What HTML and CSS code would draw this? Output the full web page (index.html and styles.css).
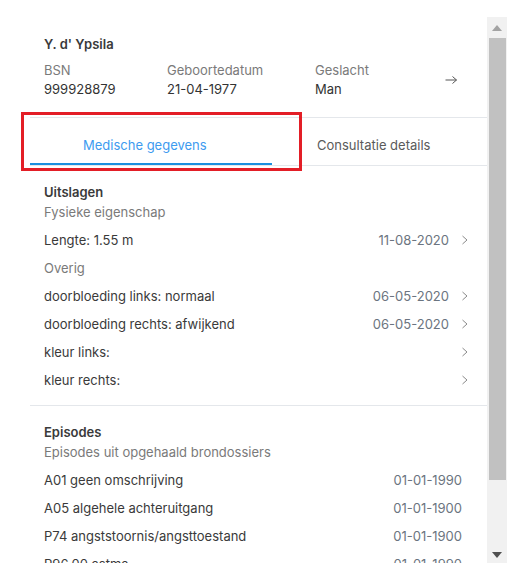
FILE: index.html
```html
<!DOCTYPE html>
<html lang="nl">
<head>
    <meta charset="utf-8">
    <title>Patiënt</title>
    <link rel="stylesheet" href="styles.css">
</head>
<body>
<div class="page">
    <div class="panel">
        <div class="panel-body">
            <div class="patient">
                <div class="patient-name">Y. d' Ypsila</div>
                <div class="patient-info">
                    <div>
                        <div class="label">BSN</div>
                        <div class="value">999928879</div>
                    </div>
                    <div>
                        <div class="label">Geboortedatum</div>
                        <div class="value">21-04-1977</div>
                    </div>
                    <div>
                        <div class="label">Geslacht</div>
                        <div class="value">Man</div>
                    </div>
                    <svg class="arrow" width="16" height="16" viewBox="0 0 16 16">
                        <path d="M2.5 8H13.5M9.5 4.5L13.5 8L9.5 11.5" fill="none" stroke="#555" stroke-width="1"/>
                    </svg>
                </div>
            </div>

            <div class="tabs">
                <div class="tab tab-first active">Medische gegevens</div>
                <div class="tab tab-second">Consultatie details</div>
            </div>

            <div class="section">
                <div class="section-title">Uitslagen</div>
                <div class="section-sub">Fysieke eigenschap</div>
                <div class="list">
                    <div class="row">
                        <span>Lengte: 1.55 m</span>
                        <span class="date">11-08-2020</span>
                        <svg class="chevron" width="16" height="16" viewBox="0 0 16 16"><path d="M5.5 4L10 8L5.5 12" fill="none" stroke="#8a8a8a" stroke-width="1"/></svg>
                    </div>
                    <div class="row group">Overig</div>
                    <div class="row">
                        <span>doorbloeding links: normaal</span>
                        <span class="date">06-05-2020</span>
                        <svg class="chevron" width="16" height="16" viewBox="0 0 16 16"><path d="M5.5 4L10 8L5.5 12" fill="none" stroke="#8a8a8a" stroke-width="1"/></svg>
                    </div>
                    <div class="row">
                        <span>doorbloeding rechts: afwijkend</span>
                        <span class="date">06-05-2020</span>
                        <svg class="chevron" width="16" height="16" viewBox="0 0 16 16"><path d="M5.5 4L10 8L5.5 12" fill="none" stroke="#8a8a8a" stroke-width="1"/></svg>
                    </div>
                    <div class="row">
                        <span>kleur links:</span>
                        <span class="date"></span>
                        <svg class="chevron" width="16" height="16" viewBox="0 0 16 16"><path d="M5.5 4L10 8L5.5 12" fill="none" stroke="#8a8a8a" stroke-width="1"/></svg>
                    </div>
                    <div class="row">
                        <span>kleur rechts:</span>
                        <span class="date"></span>
                        <svg class="chevron" width="16" height="16" viewBox="0 0 16 16"><path d="M5.5 4L10 8L5.5 12" fill="none" stroke="#8a8a8a" stroke-width="1"/></svg>
                    </div>
                </div>
            </div>

            <div class="section section-last">
                <div class="section-title">Episodes</div>
                <div class="section-sub">Episodes uit opgehaald brondossiers</div>
                <div class="list episodes">
                    <div class="row">
                        <span>A01 geen omschrijving</span>
                        <span class="date">01-01-1990</span>
                    </div>
                    <div class="row">
                        <span>A05 algehele achteruitgang</span>
                        <span class="date">01-01-1900</span>
                    </div>
                    <div class="row">
                        <span>P74 angststoornis/angsttoestand</span>
                        <span class="date">01-01-1900</span>
                    </div>
                    <div class="row">
                        <span>R96.00 astma</span>
                        <span class="date">01-01-1990</span>
                    </div>
                </div>
            </div>
        </div>

        <div class="scrollbar">
            <div class="scroll-btn">
                <svg width="10" height="6" viewBox="0 0 10 6"><path d="M0 6L5 0L10 6Z" fill="#a3a3a3"/></svg>
            </div>
            <div class="scroll-track">
                <div class="scroll-thumb"></div>
            </div>
            <div class="scroll-btn scroll-btn-down">
                <svg width="10" height="6" viewBox="0 0 10 6"><path d="M0 0L5 6L10 0Z" fill="#505050"/></svg>
            </div>
        </div>
    </div>

    <div class="highlight"></div>
</div>
</body>
</html>
```

FILE: styles.css
```css
body {
    margin: 0;
    background-color: white;
    font-family: Inter, "Noto Sans", sans-serif;
    font-size: 13px;
    color: #3a3a3a;
}

.page {
    position: relative;
    padding: 17px 6px 7px 30px;
}

.panel {
    display: flex;
    height: 546px;
}

.panel-body {
    flex: 1;
    overflow: hidden;
}

/* scrollbar */
.scrollbar {
    width: 20px;
    display: flex;
    flex-direction: column;
    background-color: #f1f1f1;
}

.scroll-btn {
    height: 21px;
    display: flex;
    align-items: center;
    justify-content: center;
}

.scroll-btn svg {
    display: block;
}

.scroll-btn-down {
    height: 17px;
}

.scroll-track {
    flex: 1;
    padding: 0 1px 0 2px;
}

.scroll-thumb {
    height: 442px;
    background-color: #c1c1c1;
}

/* patient header */
.patient {
    padding: 19px 28px 20px 14px;
    border-bottom: 1px solid #e4e7eb;
}

.patient-name {
    font-weight: 600;
    line-height: 16px;
    margin-bottom: 10px;
}

.patient-info {
    display: grid;
    grid-template-columns: 123px 148px 1fr auto;
    align-items: center;
}

.label {
    color: #7a7a7a;
    line-height: 16px;
    margin-bottom: 3px;
}

.value {
    line-height: 16px;
    color: #333;
}

.arrow {
    display: block;
}

/* tabs */
.tabs {
    display: flex;
    border-bottom: 1px solid #e4e7eb;
}

.tab {
    padding: 19px 0 10px;
    line-height: 16px;
    color: #5a5a5a;
    border-bottom: 2px solid transparent;
}

.tab-first {
    width: 242px;
    padding-left: 53px;
    box-sizing: border-box;
}

.tab-second {
    padding-left: 45px;
}

.tab.active {
    color: #3d9bef;
    border-bottom-color: #1a8fdf;
}

/* sections */
.section {
    padding: 16px 14px 11px;
    border-bottom: 1px solid #e4e7eb;
}

.section-last {
    border-bottom: none;
}

.section-title {
    font-weight: 600;
    line-height: 20px;
}

.section-sub {
    color: #7a7a7a;
    line-height: 20px;
}

.list {
    margin-top: 4px;
}

.row {
    display: flex;
    align-items: center;
    height: 28px;
}

.row span:first-child {
    flex: 1;
}

.row.group {
    color: #7a7a7a;
}

.date {
    color: #6b7480;
    margin-right: 8px;
}

.chevron {
    display: block;
}

.episodes .row {
    padding-right: 11px;
}

.episodes .date {
    margin-right: 0;
}

/* annotation frame drawn over the tab */
.highlight {
    position: absolute;
    left: 21px;
    top: 112px;
    width: 275px;
    height: 53px;
    border: 3px solid #e31e26;
}
```
